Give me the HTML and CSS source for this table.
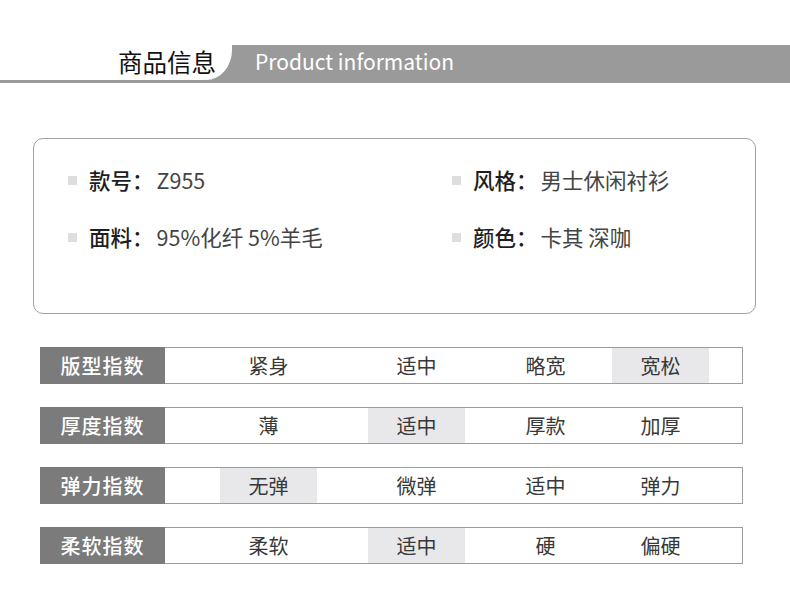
FILE: index.html
```html
<!DOCTYPE html>
<html lang="zh-CN">
<head>
<meta charset="utf-8">
<title>商品信息</title>
<link rel="stylesheet" href="styles.css">
</head>
<body>
<div class="page">
  <div class="header">
    <div class="header-left"><span class="title-cn">商品信息</span></div>
    <div class="header-right"><span class="title-en">Product information</span></div>
  </div>

  <div class="info-box">
    <div class="info-grid">
      <div class="info-item"><span class="bullet"></span><span class="info-label">款号：</span><span class="info-value">Z955</span></div>
      <div class="info-item"><span class="bullet"></span><span class="info-label">风格：</span><span class="info-value">男士休闲衬衫</span></div>
      <div class="info-item"><span class="bullet"></span><span class="info-label">面料：</span><span class="info-value">95%化纤 5%羊毛</span></div>
      <div class="info-item"><span class="bullet"></span><span class="info-label">颜色：</span><span class="info-value">卡其 深咖</span></div>
    </div>
  </div>

  <div class="scales">
    <div class="scale-row">
      <div class="scale-label">版型指数</div>
      <div class="scale-opts">
        <div class="opt">紧身</div>
        <div class="opt">适中</div>
        <div class="opt">略宽</div>
        <div class="opt active">宽松</div>
      </div>
    </div>
    <div class="scale-row">
      <div class="scale-label">厚度指数</div>
      <div class="scale-opts">
        <div class="opt">薄</div>
        <div class="opt active">适中</div>
        <div class="opt">厚款</div>
        <div class="opt">加厚</div>
      </div>
    </div>
    <div class="scale-row">
      <div class="scale-label">弹力指数</div>
      <div class="scale-opts">
        <div class="opt active">无弹</div>
        <div class="opt">微弹</div>
        <div class="opt">适中</div>
        <div class="opt">弹力</div>
      </div>
    </div>
    <div class="scale-row">
      <div class="scale-label">柔软指数</div>
      <div class="scale-opts">
        <div class="opt">柔软</div>
        <div class="opt active">适中</div>
        <div class="opt">硬</div>
        <div class="opt">偏硬</div>
      </div>
    </div>
  </div>
</div>
</body>
</html>
```

FILE: styles.css
```css
* { box-sizing: border-box; }
html, body { margin: 0; padding: 0; background: #fff; }
body {
  font-family: "Noto Sans CJK SC", "Noto Sans", sans-serif;
  color: #333;
  width: 790px;
  height: 610px;
  overflow: hidden;
}
.page { padding-top: 45px; }

.header {
  display: flex;
  height: 38px;
  background: #9a9a9a;
}
.header-left {
  width: 232px;
  height: 35px;
  background: #fff;
  border-bottom-right-radius: 26px 30px;
  display: flex;
  align-items: center;
  justify-content: flex-end;
  padding-right: 16px;
}
.title-cn {
  font-size: 24.5px;
  color: #111;
  line-height: 1;
  margin-top: -1px;
}
.header-right {
  flex: 1;
  height: 35px;
  display: flex;
  align-items: center;
  padding-left: 23px;
}
.title-en {
  font-size: 21px;
  color: #fff;
  line-height: 1;
  margin-top: -2px;
}

.info-box {
  margin: 55px 0 0 33px;
  width: 723px;
  height: 176px;
  border: 1px solid #a0a0a0;
  border-radius: 10px;
  padding: 27px 0 0 34px;
}
.info-grid {
  display: grid;
  grid-template-columns: 384px 1fr;
  row-gap: 29px;
}
.info-item {
  display: flex;
  align-items: center;
  height: 28px;
  font-size: 21.5px;
  line-height: 28px;
}
.bullet {
  width: 9px;
  height: 9px;
  background: #dedede;
  margin-right: 12px;
  margin-top: 1px;
}
.info-label {
  color: #1e1e1e;
  font-weight: 500;
}
.info-value {
  color: #444;
  margin-left: 3px;
}

.scales {
  margin: 33px 0 0 40px;
  display: flex;
  flex-direction: column;
  gap: 23px;
}
.scale-row {
  display: flex;
  width: 703px;
  height: 37px;
}
.scale-label {
  width: 125px;
  background: #7b7b7b;
  color: #fff;
  font-size: 20px;
  font-weight: 500;
  display: flex;
  align-items: center;
  justify-content: center;
  letter-spacing: 1px;
}
.scale-opts {
  flex: 1;
  display: flex;
  border: 1px solid #9c9c9c;
  border-left: none;
  padding-left: 55px;
}
.opt {
  width: 97px;
  display: flex;
  align-items: center;
  justify-content: center;
  font-size: 20px;
  color: #383838;
}
.opt:nth-child(2) { margin-left: 51px; }
.opt:nth-child(3) { margin-left: 32px; }
.opt:nth-child(4) { margin-left: 18px; }
.opt.active { background: #e8e8ea; }
```
